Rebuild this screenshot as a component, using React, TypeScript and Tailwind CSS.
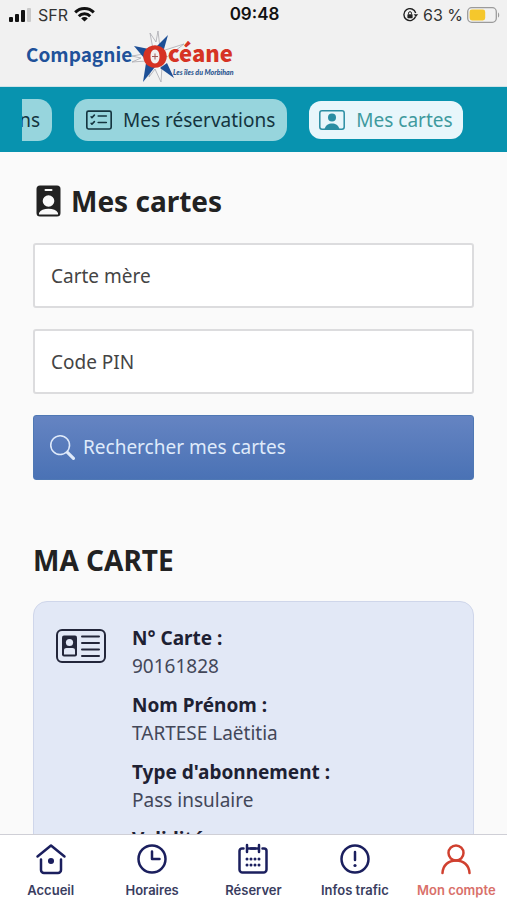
import { useLayoutEffect, useRef } from "react";
import type { ReactNode } from "react";
import { BsCardChecklist, BsSearch } from "react-icons/bs";

function SignalIcon() {
  return (
    <svg width="23" height="14" viewBox="0 0 23 14" aria-hidden="true">
      <rect x="0" y="9" width="4" height="5" rx="1" fill="#111" />
      <rect x="6" y="6" width="4" height="8" rx="1" fill="#111" />
      <rect x="12" y="2" width="4" height="12" rx="1" fill="#111" />
      <rect x="18" y="0" width="4" height="14" rx="1" fill="#c9c9c9" />
    </svg>
  );
}

function WifiIcon() {
  return (
    <svg width="21" height="15" viewBox="0 0 21 15" fill="none" stroke="#111" strokeWidth="3" aria-hidden="true">
      <path d="M1.2 5.4a13.2 13.2 0 0 1 18.6 0" />
      <path d="M4.8 9.2a8 8 0 0 1 11.4 0" />
      <path d="M10.5 14.6 7.2 11.4a4.7 4.7 0 0 1 6.6 0z" fill="#111" stroke="none" />
    </svg>
  );
}

function RotationLockIcon() {
  return (
    <svg width="16" height="14" viewBox="0 0 16 14" fill="none" stroke="#222" strokeWidth="1.4" aria-hidden="true">
      <path d="M12.6 8.6A6 6 0 1 1 12.7 5" />
      <path d="M10.6 6.2h4.6L12.9 9z" fill="#222" stroke="none" />
      <rect x="4.4" y="6.2" width="5.2" height="4" rx=".6" fill="#222" stroke="none" />
      <path d="M5.5 6.4V5.2a1.5 1.5 0 0 1 3 0v1.2" strokeWidth="1" />
    </svg>
  );
}

function BatteryIcon() {
  return (
    <svg width="33" height="16" viewBox="0 0 33 16" fill="none" aria-hidden="true">
      <rect x=".7" y=".7" width="28.6" height="14.6" rx="4" stroke="#9b9b9b" strokeWidth="1.3" />
      <rect x="2.6" y="2.6" width="15.6" height="10.8" rx="2.4" fill="#f5c72c" />
      <path d="M31 5.4c1.6.6 1.6 4.6 0 5.2z" fill="#9b9b9b" />
    </svg>
  );
}

function Logo() {
  return (
    <svg width="212" height="56" viewBox="0 0 212 56" role="img" aria-label="Compagnie Océane, Les îles du Morbihan">
      <g fill="#f6f6f6" stroke="#a9a9b0" strokeWidth=".8" strokeLinejoin="round">
        <path d="M127 20 124 4l6 9 2-11 2 17z" />
        <path d="M136 22 158 15l-17 13z" />
        <path d="M118 25 106 27l9 2-9 4 14-1z" />
        <path d="M126 36 123 48l6-8 6 13 1-16z" />
      </g>
      <g fill="#1d4f96">
        <path d="M108 17 123 20 118 29z" />
        <path d="M142 6 138 20 130 18z" />
        <path d="M117 53 120 34 129 38z" />
        <path d="M148 49 134 39 141 34z" />
      </g>
      <text x="0" y="33" fontFamily="'Noto Sans CJK JP', 'Noto Sans', sans-serif" fontWeight="700" fontSize="19" fill="#20519a">
        Compagnie
      </text>
      <path
        fillRule="evenodd"
        d="M129 16.200a11.800 11.300 0 1 0 .01 0zM129 20.500c3 0 4.500 3 4.500 7s-1.500 7-4.500 7-4.500-3-4.500-7 1.500-7 4.500-7z"
        fill="#d63324"
      />
      <path d="M126 27.500h6M129 24.500v6" stroke="#a05a58" strokeWidth="1" />
      <text x="142" y="33" fontFamily="'Noto Sans CJK JP', 'Noto Sans', sans-serif" fontWeight="900" fontSize="22" fill="#d63324">
        céane
      </text>
      <text x="147" y="46" fontFamily="Lato, 'Noto Sans', sans-serif" fontWeight="900" fontStyle="italic" fontSize="7" fill="#2b568f">
        Les îles du Morbihan
      </text>
    </svg>
  );
}

function BadgeIcon() {
  return (
    <svg width="25" height="32" viewBox="0 0 25 32" aria-hidden="true">
      <rect x=".5" y=".5" width="24" height="31" rx="3.500" fill="#222" />
      <rect x="8.500" y="4" width="8" height="2" rx="1" fill="#fafafa" />
      <circle cx="12.500" cy="16" r="5.800" fill="#fafafa" />
      <path d="M3 29.500v-1.500c1.500-3 5-4.200 9.500-4.200s8 1.200 9.500 4.200v1.500z" fill="#fafafa" />
    </svg>
  );
}

function PersonFrameIcon() {
  return (
    <svg width="26" height="20" viewBox="0 0 26 20" fill="currentColor" aria-hidden="true">
      <rect x=".8" y=".8" width="24.400" height="18.400" rx="2.200" fill="none" stroke="currentColor" strokeWidth="1.500" />
      <circle cx="13" cy="7.500" r="4" />
      <path d="M5.500 19c1.200-4 4-5.600 7.500-5.600s6.300 1.600 7.500 5.600z" />
    </svg>
  );
}

function IdCardIcon() {
  return (
    <svg width="50" height="34" viewBox="0 0 50 34" fill="none" stroke="#23263a" strokeWidth="2" strokeLinecap="round" aria-hidden="true">
      <rect x="1" y="1" width="48" height="32" rx="5" />
      <rect x="6" y="6.500" width="15" height="21" rx="2" fill="#23263a" stroke="none" />
      <circle cx="13.500" cy="13.500" r="3.600" fill="#e2e8f6" stroke="none" />
      <path d="M8 25.500v-4c0-1.600 1-2.400 2.500-2.400h6c1.500 0 2.500.8 2.500 2.400v4z" fill="#e2e8f6" stroke="none" />
      <path d="M26 7.500h17M26 14h17M26 20.500h17M26 27h17" />
    </svg>
  );
}

function NavSvg({ children }: { children: ReactNode }) {
  return (
    <svg
      width="32"
      height="32"
      viewBox="0 0 32 32"
      fill="none"
      stroke="currentColor"
      strokeWidth="2.500"
      strokeLinecap="round"
      strokeLinejoin="round"
      aria-hidden="true"
    >
      {children}
    </svg>
  );
}

const navItems = [
  {
    label: "Accueil",
    active: false,
    icon: (
      <NavSvg>
        <path d="M2.500 13.500 16 2.500l13.500 11" />
        <path d="M6 16.500V27a3 3 0 0 0 3 3h14a3 3 0 0 0 3-3V16.500" />
        <circle cx="16" cy="18" r="1.800" fill="currentColor" />
      </NavSvg>
    ),
  },
  {
    label: "Horaires",
    active: false,
    icon: (
      <NavSvg>
        <circle cx="16" cy="16" r="13.500" />
        <path d="M16 8.500V16h7.500" />
      </NavSvg>
    ),
  },
  {
    label: "Réserver",
    active: false,
    icon: (
      <NavSvg>
        <path d="M14 5.500h4M6.500 5.500H5a2.500 2.500 0 0 0-2.500 2.500v18.500A3 3 0 0 0 5.500 29.500h21a3 3 0 0 0 3-3V8A2.500 2.500 0 0 0 27 5.500h-1.500" />
        <path d="M10 2v7M22 2v7M10 5.500h12" />
        <g strokeWidth="3">
          <path d="M10 16h.01M14 16h.01M18 16h.01M22 16h.01M10 22h.01M14 22h.01M18 22h.01M22 22h.01" />
        </g>
      </NavSvg>
    ),
  },
  {
    label: "Infos trafic",
    active: false,
    icon: (
      <NavSvg>
        <circle cx="16" cy="16" r="13.500" />
        <path d="M16 9v8" />
        <path d="M16 22.500h.01" strokeWidth="3.200" />
      </NavSvg>
    ),
  },
  {
    label: "Mon compte",
    active: true,
    icon: (
      <NavSvg>
        <circle cx="16" cy="10" r="7.500" />
        <path d="M2.500 30c.5-8 6-12.500 13.500-12.500S29 22 29.500 30" />
      </NavSvg>
    ),
  },
];

const cardDetails = [
  { label: "N° Carte :", value: "90161828" },
  { label: "Nom Prénom :", value: "TARTESE Laëtitia" },
  { label: "Type d'abonnement :", value: "Pass insulaire" },
  { label: "Validité :", value: "" },
];

function AccountTabs() {
  const scroller = useRef<HTMLDivElement>(null);

  // Bring the active tab, the last one, into view.
  useLayoutEffect(() => {
    const el = scroller.current;
    if (el) el.scrollLeft = el.scrollWidth;
  }, []);

  return (
    <nav className="bg-[#0893af] px-[22px] pt-3 pb-[11px]" aria-label="Mon compte">
      <div
        ref={scroller}
        className="flex items-center gap-[22px] overflow-x-auto text-[19px] leading-7 whitespace-nowrap [scrollbar-width:none]"
      >
        <a href="#informations" className="shrink-0 rounded-[14px] bg-[#97d5dd] px-3 py-[7px] text-[#14343f]">
          Mes informations
        </a>
        <a href="#reservations" className="flex shrink-0 items-center gap-[11px] rounded-[14px] bg-[#97d5dd] px-3 py-[7px] text-[#14343f]">
          <BsCardChecklist className="size-[26px]" />
          Mes réservations
        </a>
        <a
          href="#cartes"
          aria-current="page"
          className="mr-[22px] flex shrink-0 items-center gap-[11px] rounded-[12px] bg-[#e8f6fb] px-[10px] py-[5px] text-[#3f9a9e]"
        >
          <span className="text-[#2a8da3]">
            <PersonFrameIcon />
          </span>
          Mes cartes
        </a>
      </div>
    </nav>
  );
}

export default function App() {
  return (
    <div className="flex h-dvh flex-col bg-[#fafafa] font-['Noto_Sans',sans-serif] text-[#222]">
      <header className="border-b border-[#cfe3e8] bg-[#f1f1f1]">
        <div className="grid h-[29px] grid-cols-[1fr_auto_1fr] items-center pr-[7px] pl-[9px] font-['Inter',sans-serif] text-base text-[#333]">
          <div className="flex items-center gap-[6px]">
            <SignalIcon />
            <span>SFR</span>
            <WifiIcon />
          </div>
          <span className="text-[17px] font-semibold text-[#111]">09:48</span>
          <div className="flex items-center justify-end gap-1">
            <RotationLockIcon />
            <span>63 %</span>
            <BatteryIcon />
          </div>
        </div>
        <div className="h-[57px] pl-[26px]">
          <Logo />
        </div>
      </header>

      <AccountTabs />

      <main className="min-h-0 flex-1 overflow-y-auto px-[33px] pt-[29px] [scrollbar-width:none]">
        <h1 className="flex items-center gap-[10px] pl-[3px] text-[28px] leading-10 font-bold">
          <BadgeIcon />
          Mes cartes
        </h1>

        <form className="mt-[22px] flex flex-col gap-[21px] text-[19px]" onSubmit={(e) => e.preventDefault()}>
          <input
            type="text"
            aria-label="Carte mère"
            placeholder="Carte mère"
            className="h-[65px] w-full rounded-[3px] border-2 border-[#dcdcde] bg-white px-4 placeholder:text-[#444]"
          />
          <input
            type="text"
            aria-label="Code PIN"
            placeholder="Code PIN"
            className="h-[65px] w-full rounded-[3px] border-2 border-[#dcdcde] bg-white px-4 placeholder:text-[#444]"
          />
          <button
            type="submit"
            className="flex h-[65px] w-full items-center gap-2 rounded-[3px] border border-[#4f78b4] bg-linear-to-b from-[#6584c2] to-[#4a72b5] px-4 text-[#dfeafa]"
          >
            <BsSearch className="size-[25px]" />
            Rechercher mes cartes
          </button>
        </form>

        <h2 className="mt-[60px] text-[28px] leading-10 font-bold">MA CARTE</h2>

        <section className="mt-[21px] flex gap-[26px] rounded-t-[14px] border border-[#cfd6ea] bg-[#e2e8f6] px-[22px] pt-[22px]">
          <div className="shrink-0 pt-[5px]">
            <IdCardIcon />
          </div>
          <dl className="flex flex-col gap-[11px] text-[19px] leading-7">
            {cardDetails.map((detail) => (
              <div key={detail.label}>
                <dt className="font-bold text-[#1e2133]">{detail.label}</dt>
                <dd className="text-[#434759]">{detail.value}</dd>
              </div>
            ))}
          </dl>
        </section>
      </main>

      <nav
        className="grid grid-cols-5 border-t border-[#cfcfd6] bg-white pt-2 font-['Inter',sans-serif] text-[13px] leading-5 font-semibold"
        aria-label="Navigation principale"
      >
        {navItems.map((item) => (
          <a
            key={item.label}
            href="#"
            aria-current={item.active ? "page" : undefined}
            className={
              item.active
                ? "flex flex-col items-center gap-[5px] whitespace-nowrap text-[#d0402f]"
                : "flex flex-col items-center gap-[5px] whitespace-nowrap text-[#1b1f5e]"
            }
          >
            {item.icon}
            <span className={item.active ? "text-[#d9706a]" : "text-[#3a3d5f]"}>{item.label}</span>
          </a>
        ))}
      </nav>
    </div>
  );
}
